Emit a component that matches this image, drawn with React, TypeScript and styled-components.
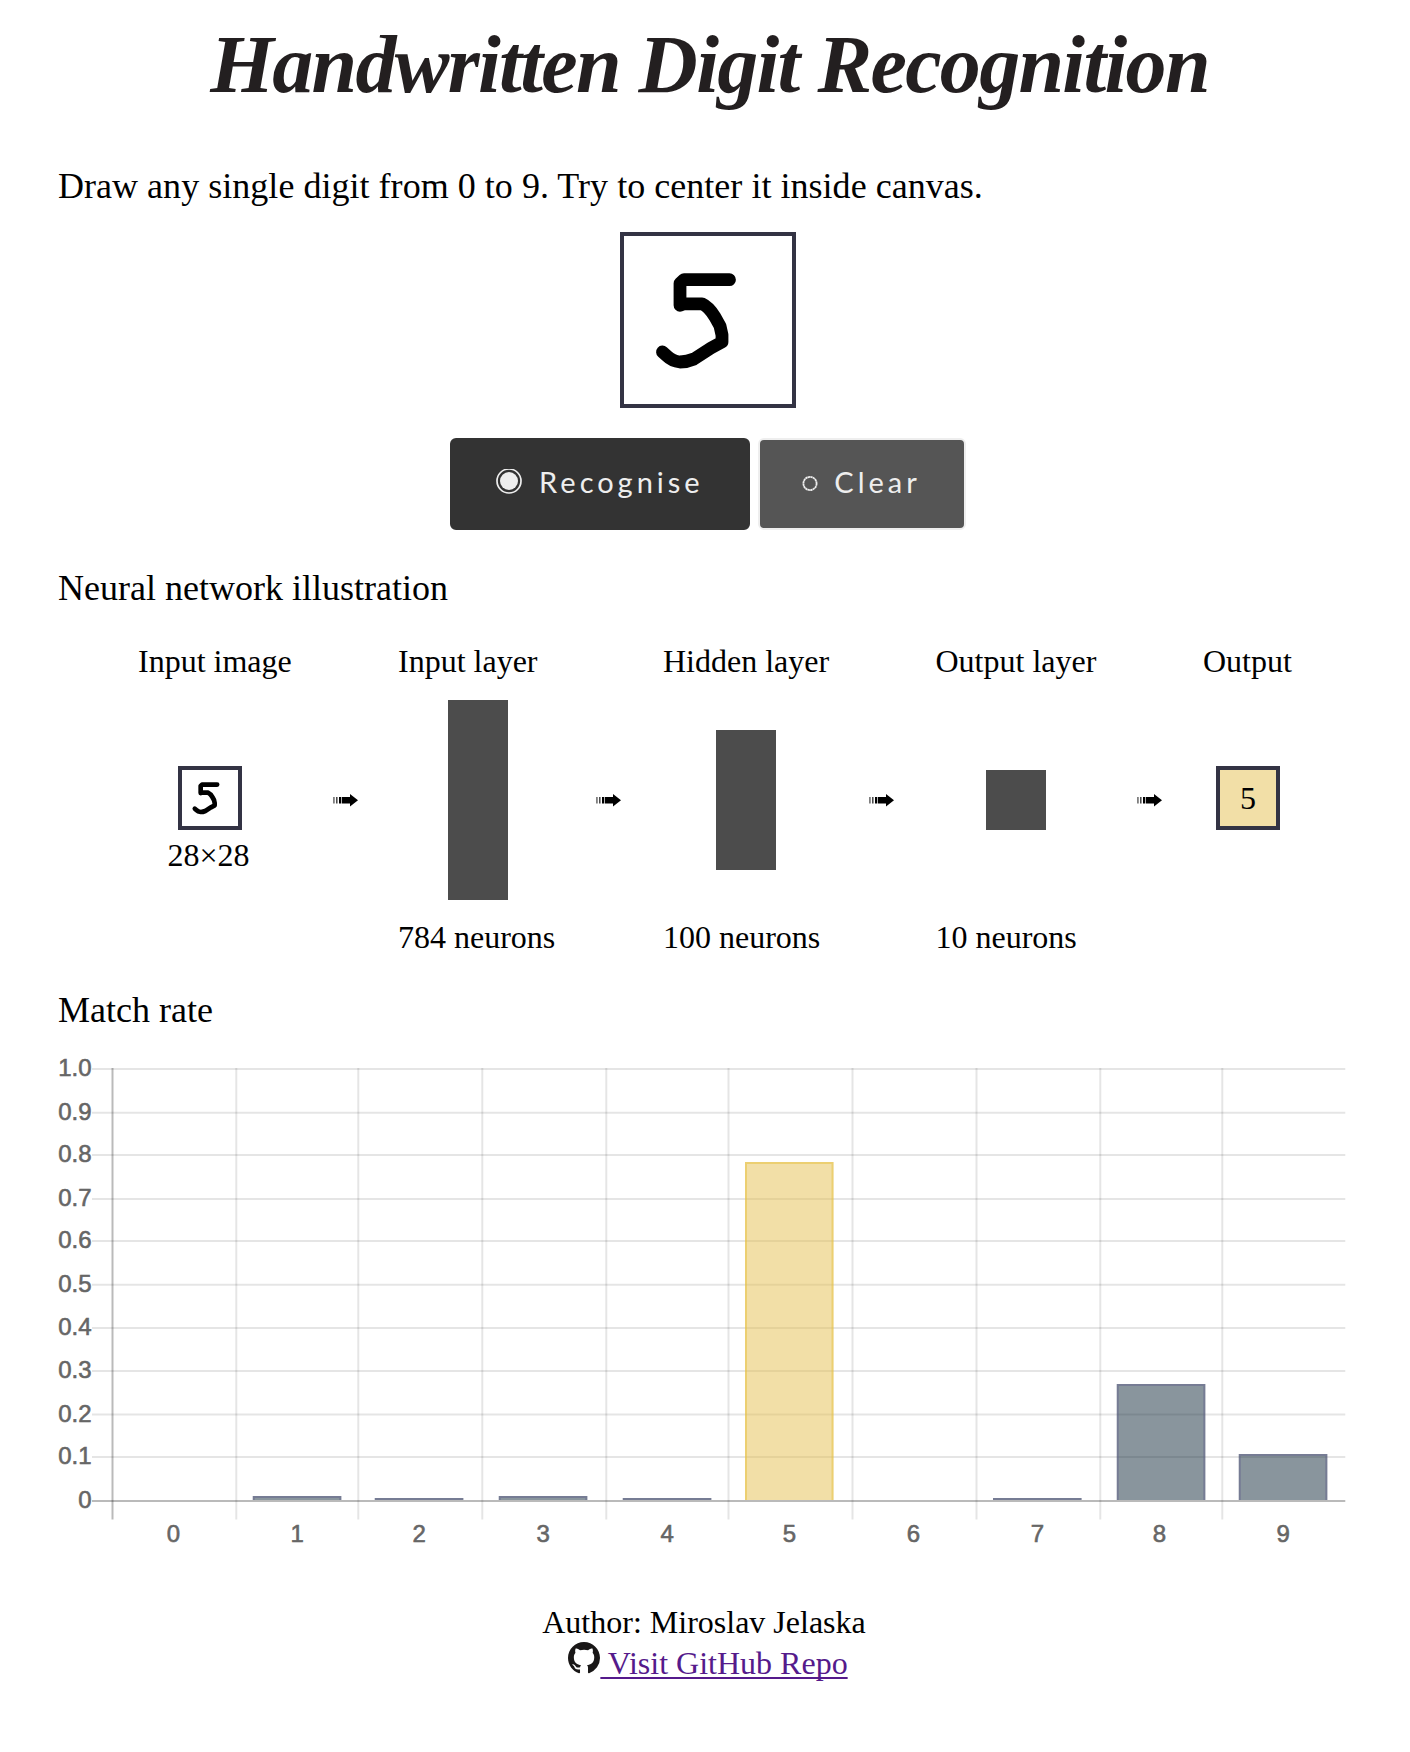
import React from 'react';
import styled, { createGlobalStyle } from 'styled-components';

const GlobalStyle = createGlobalStyle`
  body {
    margin: 0;
    background: #fff;
    color: #000;
    font-family: "Liberation Serif", "Times New Roman", serif;
  }
`;

const Page = styled.main`
  box-sizing: border-box;
  width: 1410px;
  height: 1752px;
  padding: 20px 58px 0;
  display: flex;
  flex-direction: column;
  overflow: hidden;
`;

const Title = styled.h1`
  margin: 0 0 55px;
  padding-left: 9px;
  height: 90px;
  text-align: center;
  white-space: nowrap;
  color: #231f20;
  font: italic bold 82px/90px "Liberation Serif", serif;
  letter-spacing: -1.7px;
`;

const Heading = styled.p<{ $top?: number }>`
  margin: ${({ $top = 0 }) => $top}px 0 0;
  font-size: 36px;
  line-height: 42px;
`;

const Intro = styled(Heading)`
  letter-spacing: 0.03px;
`;

const FrameBox = styled.div<{ $size: number; $fill?: string }>`
  box-sizing: border-box;
  flex: none;
  display: flex;
  align-items: center;
  justify-content: center;
  width: ${({ $size }) => $size}px;
  height: ${({ $size }) => $size}px;
  border: 4px solid #333344;
  background: ${({ $fill = '#fff' }) => $fill};
  font-size: 32px;
  line-height: 36px;
`;

const CanvasRow = styled.div`
  display: flex;
  justify-content: center;
  margin-top: 25px;
  padding-left: 6px;
`;

const Buttons = styled.div`
  display: flex;
  gap: 8px;
  margin: 30px 0 0 392px;
`;

const Button = styled.button<{ $width: number; $bg: string; $border: string; $gap: number; $pad: number }>`
  box-sizing: border-box;
  flex: none;
  width: ${({ $width }) => $width}px;
  height: 92px;
  padding: 0 0 0 ${({ $pad }) => $pad}px;
  display: flex;
  align-items: center;
  gap: ${({ $gap }) => $gap}px;
  border: 2px solid ${({ $border }) => $border};
  border-radius: 6px;
  background: ${({ $bg }) => $bg};
  color: #eee;
  font: 29px/34px Lato, sans-serif;
  letter-spacing: 4px;
  white-space: nowrap;
`;

const ButtonText = styled.span`
  margin-bottom: 4px;
`;

const Network = styled.section`
  display: grid;
  grid-template-columns: 146px 114px 162px 103px 168px 104.5px 163px 104.5px 92px;
  grid-template-rows: 36px 200px 36px;
  row-gap: 20px;
  margin: 34px 0 0 79px;
  font-size: 32px;
  line-height: 36px;
  white-space: nowrap;
`;

const Label = styled.div<{ $col: number; $row: number }>`
  grid-column: ${({ $col }) => $col};
  grid-row: ${({ $row }) => $row};
  padding-left: 1px;
`;

const Figure = styled.div<{ $col: number; $top?: number; $left?: number; $right?: number }>`
  grid-column: ${({ $col }) => $col};
  grid-row: 2;
  display: flex;
  flex-direction: column;
  align-items: center;
  align-self: start;
  padding-top: ${({ $top = 0 }) => $top}px;
  padding-left: ${({ $left = 0 }) => $left}px;
  padding-right: ${({ $right = 0 }) => $right}px;
`;

const Neurons = styled.div<{ $height: number }>`
  width: 60px;
  height: ${({ $height }) => $height}px;
  background: #4c4c4c;
`;

const Caption = styled.div`
  margin: 7px 3px 0 0;
`;

const Chart = styled.svg`
  display: block;
  flex: none;
  margin: 9px 0 0 -8px;
  font: 24px "Liberation Sans", Helvetica, Arial, sans-serif;
`;

const Footer = styled.footer`
  margin-top: 43px;
  padding-right: 2px;
  text-align: center;
  font-size: 32px;
  line-height: 39px;
`;

const RepoLink = styled.a`
  margin-left: 8px;
  color: #551a8b;
  text-decoration: underline;
  text-decoration-thickness: 2px;
  text-underline-offset: 3px;
  text-decoration-skip-ink: none;
`;

const Digit = ({ size, weight }: { size: number; weight: number }) => (
  <svg width={size} height={size} viewBox="0 0 168 168" fill="none" stroke="#000" strokeWidth={weight} strokeLinecap="round" strokeLinejoin="round">
    <path d="M105.5 43.7H60L56 47.5V69.3L60 67.8H78Q85 71 91 81L96 90L98 99V106L87 112L70 123Q63 126 56 126Q48 125 43 120L38.5 116" />
  </svg>
);

const Arrow = () => (
  <svg width="26" height="14" viewBox="0 0 26 14">
    <path d="M.5 4h.9v6.5H.5zM3.3 4h1.1v6.5H3.3zM6 4h2v6.5H6zM8.7 4h8.3V1l8 6.3-8 6.2v-3H8.7z" />
  </svg>
);

const GitHubMark = () => (
  <svg width="32" height="32" viewBox="0 0 16 16" fill="#191717">
    <path d="M8 0C3.58 0 0 3.58 0 8c0 3.54 2.29 6.53 5.47 7.59.4.07.55-.17.55-.38 0-.19-.01-.82-.01-1.49-2.01.37-2.53-.49-2.69-.94-.09-.23-.48-.94-.82-1.13-.28-.15-.68-.52-.01-.53.63-.01 1.08.58 1.23.82.72 1.21 1.87.87 2.33.66.07-.52.28-.87.51-1.07-1.78-.2-3.64-.89-3.64-3.95 0-.87.31-1.59.82-2.15-.08-.2-.36-1.02.08-2.12 0 0 .67-.21 2.2.82.64-.18 1.32-.27 2-.27.68 0 1.36.09 2 .27 1.53-1.04 2.2-.82 2.2-.82.44 1.1.16 1.92.08 2.12.51.56.82 1.27.82 2.15 0 3.07-1.87 3.75-3.65 3.95.29.25.54.73.54 1.48 0 1.07-.01 1.93-.01 2.2 0 .21.15.46.55.38A8.013 8.013 0 0 0 16 8c0-4.42-3.58-8-8-8z" />
  </svg>
);

// Chart geometry, in the coordinates of the chart's own viewBox.
const columns = [62.5, 186.3, 308.3, 432.3, 556.3, 678.5, 802.5, 926.5, 1050.3, 1172.3];
const labelCenters = [123.4, 247.3, 369.3, 493.3, 617.3, 739.4, 863.4, 987.4, 1109.4, 1233.3];
const rows = [29, 72.7, 115, 159, 201, 244.7, 288, 331, 374.6, 417, 461];
const tickText = ['1.0', '0.9', '0.8', '0.7', '0.6', '0.5', '0.4', '0.3', '0.2', '0.1', '0'];
const barTops: (number | null)[] = [null, 456, 458, 456, 458, 122, null, 458, 344, 414];

const MatchChart = () => (
  <Chart width="1312" height="520" viewBox="0 0 1312 520">
    {rows.map((y, i) => (
      <line key={y} x1="42" x2="1295.3" y1={y} y2={y} stroke="#000" strokeOpacity={i === 10 ? 0.27 : 0.1} strokeWidth="2" />
    ))}
    {columns.map((x, i) => (
      <line key={x} x1={x} x2={x} y1="28" y2="479.5" stroke="#000" strokeOpacity={i === 0 ? 0.27 : 0.1} strokeWidth="2" />
    ))}
    {barTops.map((top, i) => {
      if (top === null) return null;
      const x = columns[i] + 16.5;
      const match = i === 5;
      return (
        <g key={i}>
          <rect x={x} y={top} width="88.5" height={460 - top} fill={match ? 'rgba(230,191,79,.5)' : 'rgba(19,44,60,.5)'} />
          <path
            d={`M${x + 1} 460V${top + 1}H${x + 87.5}V460`}
            fill="none"
            strokeWidth="2"
            stroke={match ? 'rgba(230,191,60,.5)' : 'rgba(100,100,140,.5)'}
          />
        </g>
      );
    })}
    <g fill="#666" stroke="#666" strokeWidth=".6">
      {tickText.map((text, i) => (
        <text key={text} x="41.5" y={rows[i] + 7.3} textAnchor="end">{text}</text>
      ))}
      {labelCenters.map((x, i) => (
        <text key={x} x={x} y="502.3" textAnchor="middle">{i}</text>
      ))}
    </g>
  </Chart>
);

export default function App() {
  return (
    <Page>
      <GlobalStyle />
      <Title>Handwritten Digit Recognition</Title>
      <Intro>Draw any single digit from 0 to 9. Try to center it inside canvas.</Intro>
      <CanvasRow>
        <FrameBox $size={176}><Digit size={168} weight={12.8} /></FrameBox>
      </CanvasRow>
      <Buttons>
        <Button $width={300} $bg="#333" $border="#333" $gap={17.5} $pad={43.6}>
          <svg width="26" height="30" viewBox="0 0 26 30">
            <circle cx="13" cy="12" r="12" fill="none" stroke="#eee" strokeWidth="1.7" />
            <circle cx="13" cy="12" r="9" fill="#eee" />
          </svg>
          <ButtonText>Recognise</ButtonText>
        </Button>
        <Button $width={208} $bg="#555" $border="#eee" $gap={16.4} $pad={41.9}>
          <svg width="16" height="16" viewBox="0 0 16 16">
            <circle cx="8" cy="7.5" r="6.6" fill="none" stroke="#eee" strokeWidth="1.8" strokeDasharray="2.3 .3" />
          </svg>
          <ButtonText>Clear</ButtonText>
        </Button>
      </Buttons>
      <Heading $top={37}>Neural network illustration</Heading>
      <Network>
        <Label $col={1} $row={1}>Input image</Label>
        <Label $col={3} $row={1}>Input layer</Label>
        <Label $col={5} $row={1}>Hidden layer</Label>
        <Label $col={7} $row={1}>Output layer</Label>
        <Label $col={9} $row={1}>Output</Label>
        <Figure $col={1} $top={67}>
          <FrameBox $size={64}><Digit size={56} weight={14} /></FrameBox>
          <Caption>28×28</Caption>
        </Figure>
        <Figure $col={2} $top={94} $left={11}><Arrow /></Figure>
        <Figure $col={3} $top={1}><Neurons $height={200} /></Figure>
        <Figure $col={4} $top={94} $right={3}><Arrow /></Figure>
        <Figure $col={5} $top={31}><Neurons $height={140} /></Figure>
        <Figure $col={6} $top={94}><Arrow /></Figure>
        <Figure $col={7} $top={71}><Neurons $height={60} /></Figure>
        <Figure $col={8} $top={94}><Arrow /></Figure>
        <Figure $col={9} $top={67}><FrameBox $size={64} $fill="#f2dfa7">5</FrameBox></Figure>
        <Label $col={3} $row={3}>784 neurons</Label>
        <Label $col={5} $row={3}>100 neurons</Label>
        <Label $col={7} $row={3}>10 neurons</Label>
      </Network>
      <Heading $top={34}>Match rate</Heading>
      <MatchChart />
      <Footer>
        Author: Miroslav Jelaska<br />
        <RepoLink href="#"><GitHubMark /> Visit GitHub Repo</RepoLink>
      </Footer>
    </Page>
  );
}
